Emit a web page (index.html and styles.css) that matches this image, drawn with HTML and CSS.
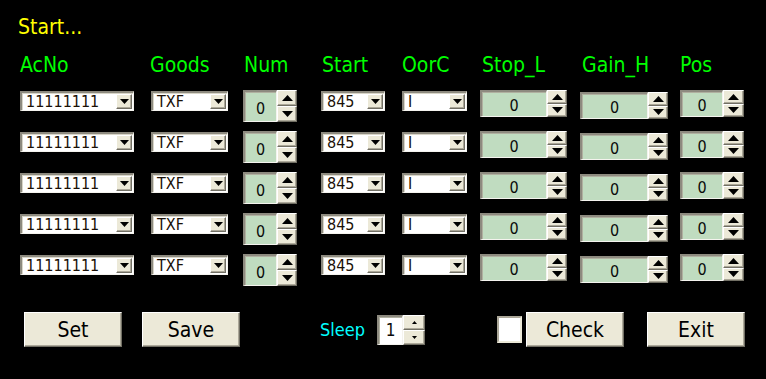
FILE: index.html
```html
<!DOCTYPE html>
<html>
<head>
<meta charset="utf-8">
<link rel="stylesheet" href="styles.css">
</head>
<body>
<div class="app">
  <div class="status">Start...</div>
  <div class="grid" id="grid">
    <div class="hd">AcNo</div>
    <div class="hd hd-goods">Goods</div>
    <div class="hd hd-num">Num</div>
    <div class="hd hd-start">Start</div>
    <div class="hd">OorC</div>
    <div class="hd hd-stop">Stop_L</div>
    <div class="hd hd-gain">Gain_H</div>
    <div class="hd">Pos</div>
  </div>
  <div class="footer">
    <button class="btn btn-set">Set</button>
    <button class="btn btn-save">Save</button>
    <span class="sleep">Sleep</span>
    <div class="spin spin-sleep">
      <div class="spin-box">1</div>
      <div class="spin-btns">
        <div class="sbtn"><svg width="5" height="3" viewBox="0 0 5 3"><polygon points="2.5,0 5,3 0,3" fill="#000"/></svg></div>
        <div class="sbtn"><svg width="5" height="3" viewBox="0 0 5 3"><polygon points="0,0 5,0 2.5,3" fill="#000"/></svg></div>
      </div>
    </div>
    <div class="check"></div>
    <button class="btn btn-check">Check</button>
    <button class="btn btn-exit">Exit</button>
  </div>
</div>
<script>
(function(){
  var g = document.getElementById('grid');
  var down = '<svg width="9" height="5" viewBox="0 0 9 5"><polygon points="0,0 9,0 4.5,5" fill="#000"/></svg>';
  var up11 = '<svg width="11" height="6" viewBox="0 0 11 6"><polygon points="5.5,0 11,6 0,6" fill="#000"/></svg>';
  var dn11 = '<svg width="11" height="6" viewBox="0 0 11 6"><polygon points="0,0 11,0 5.5,6" fill="#000"/></svg>';
  function combo(cls, v){
    return '<div class="combo '+cls+'"><span class="val">'+v+'</span><span class="drop">'+down+'</span></div>';
  }
  function spin(cls){
    return '<div class="spin '+cls+'"><div class="spin-box">0</div><div class="spin-btns"><div class="sbtn">'+up11+'</div><div class="sbtn">'+dn11+'</div></div></div>';
  }
  var html = '';
  for (var i=0;i<5;i++){
    html += combo('w-acno','11111111');
    html += combo('w-goods','TXF');
    html += spin('w-num');
    html += combo('w-start','845');
    html += combo('w-oorc','I');
    html += spin('w-stop');
    html += spin('w-gain');
    html += spin('w-pos');
  }
  g.insertAdjacentHTML('beforeend', html);
})();
</script>
</body>
</html>
```

FILE: styles.css
```css
html, body {
  margin: 0;
  padding: 0;
  background: #000;
}
body {
  width: 766px;
  height: 379px;
  overflow: hidden;
  font-family: "DejaVu Sans Condensed", "DejaVu Sans", sans-serif;
  font-stretch: condensed;
}
.app {
  display: flex;
  flex-direction: column;
}
.status {
  color: #ffff00;
  font-size: 21px;
  line-height: 24px;
  padding: 15px 0 0 18px;
  height: 24px;
}
.grid {
  margin: 14px 0 0 20px;
  display: grid;
  grid-template-columns: 131px 92px 78px 81px 78px 100px 100px 86px;
  grid-template-rows: 37px repeat(5, 41px);
  align-items: start;
  justify-items: start;
}
.hd {
  color: #00ff00;
  font-size: 21px;
  line-height: 24px;
}
.hd-goods { margin-left: -1px; }
.hd-num { margin-left: 1px; }
.hd-start { margin-left: 1px; }
.hd-stop { margin-left: 2px; }
.hd-gain { margin-left: 2px; }

/* combo box */
.combo {
  box-sizing: border-box;
  height: 20px;
  margin-top: 1px;
  display: flex;
  background: #fff;
  border-style: solid;
  border-width: 2px 1px 1px 2px;
  border-color: #8d8a7f #f4f3ee #f4f3ee #8d8a7f;
  box-shadow: inset 1px 1px 0 #d8d5c8;
}
.combo .val {
  flex: 1;
  font-size: 16px;
  line-height: 16px;
  padding: 1px 0 0 4px;
  color: #1a1006;
  white-space: nowrap;
}
.combo .drop {
  box-sizing: border-box;
  width: 16px;
  height: 15px;
  margin: 1px 1px 0 0;
  background: #ece9d8;
  border: 1px solid;
  border-color: #fff #716f64 #716f64 #fff;
  box-shadow: inset -1px -1px 0 #aca899;
  display: flex;
  align-items: center;
  justify-content: center;
}
.w-acno { width: 114px; }
.w-goods { width: 77px; margin-left: 0; }
.w-start { width: 64px; }
.w-oorc { width: 65px; }

/* spinner */
.spin {
  display: flex;
}
.spin-box {
  box-sizing: border-box;
  background: #c0dcc0;
  border-style: solid;
  border-width: 2px 1px 1px 2px;
  border-color: #8d8a7f #f4f3ee #f4f3ee #8d8a7f;
  box-shadow: inset 1px 1px 0 #b0b0a0;
  font-size: 16px;
  color: #0a0a0a;
  display: flex;
  align-items: center;
  justify-content: center;
  padding-top: 2px;
}
.spin-btns {
  display: flex;
  flex-direction: column;
}
.sbtn {
  box-sizing: border-box;
  flex: 1;
  background: #ece9d8;
  border: 1px solid;
  border-color: #fff #716f64 #716f64 #fff;
  box-shadow: inset -1px -1px 0 #aca899;
  display: flex;
  align-items: center;
  justify-content: center;
}
.w-num { height: 32px; margin-top: 0; }
.w-num .spin-box { width: 34px; padding-top: 4px; }
.w-num .spin-btns { width: 20px; }
.w-stop { height: 27px; }
.w-stop .spin-box { width: 67px; }
.w-stop .spin-btns { width: 20px; }
.w-gain { height: 27px; margin-top: 2px; }
.w-gain .spin-box { width: 68px; }
.w-gain .spin-btns { width: 20px; }
.w-pos { height: 27px; }
.w-pos .spin-box { width: 43px; }
.w-pos .spin-btns { width: 21px; }

/* footer */
.footer {
  margin-top: 17px;
  padding-left: 24px;
  display: flex;
  align-items: center;
  height: 35px;
}
.btn {
  box-sizing: border-box;
  width: 98px;
  height: 35px;
  padding: 0;
  background: #ece9d8;
  border: 1px solid;
  border-color: #fff #716f64 #716f64 #fff;
  box-shadow: inset -1px -1px 0 #aca899;
  font-family: inherit;
  font-size: 21px;
  color: #000;
}
.btn-save { margin-left: 20px; }
.sleep {
  margin-left: 80px;
  color: #00ffff;
  font-size: 18px;
}
.spin-sleep {
  margin-left: 12px;
  height: 30px;
}
.spin-sleep .spin-box {
  width: 26px;
  background: #fff;
  padding-top: 0;
  font-size: 17px;
}
.spin-sleep .spin-btns { width: 22px; }
.check {
  box-sizing: border-box;
  margin-left: 72px;
  width: 25px;
  height: 27px;
  background: #fff;
  border-style: solid;
  border-width: 2px 2px 2px 2px;
  border-color: #aca899 #ece9d8 #ece9d8 #aca899;
}
.btn-check { margin-left: 4px; }
.btn-exit { margin-left: 23px; }
```
